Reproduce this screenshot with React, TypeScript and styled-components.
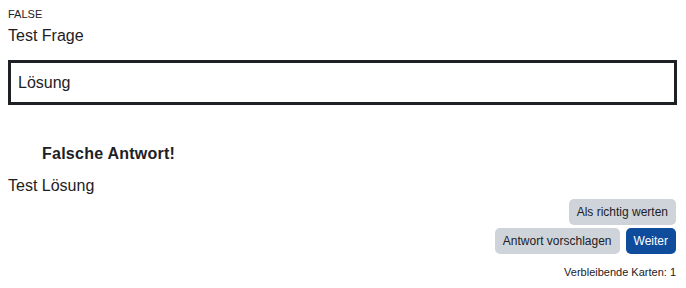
import React from "react";
import styled, { createGlobalStyle } from "styled-components";

const Global = createGlobalStyle`
  body {
    margin: 8px;
    font-family: "Liberation Sans", Arial, sans-serif;
    color: #1d2125;
    background: #fff;
  }
`;

const Page = styled.div`
  display: flex;
  flex-direction: column;
  width: 669px;
`;

const Label = styled.div`
  font-size: 11px;
  line-height: 12px;
`;

const Question = styled.div`
  font-size: 16px;
  line-height: 24px;
  margin-top: 4px;
`;

const AnswerBox = styled.div`
  margin-top: 12px;
  border: 3px solid #1d2125;
  height: 39px;
  box-sizing: content-box;
  display: flex;
  align-items: center;
  padding: 0 7px;
  font-size: 16px;
`;

const Feedback = styled.div`
  margin-top: 37px;
  padding-left: 34px;
  font-size: 16px;
  font-weight: 700;
  line-height: 24px;
  letter-spacing: 0.25px;
`;

const Solution = styled.div`
  margin-top: 8px;
  font-size: 16px;
  line-height: 24px;
`;

const ButtonRow = styled.div<{ $top: number }>`
  display: flex;
  justify-content: flex-end;
  gap: 6px;
  margin-top: ${(p) => p.$top}px;
  padding-right: 1px;
`;

const Button = styled.button<{ $primary?: boolean }>`
  font-family: "Liberation Sans", Arial, sans-serif;
  font-size: 12px;
  height: 26px;
  padding: 0 8px;
  border: none;
  border-radius: 5px;
  background: ${(p) => (p.$primary ? "#0f4c9c" : "#ced4da")};
  color: ${(p) => (p.$primary ? "#fff" : "#1d2125")};
  cursor: pointer;
`;

const Remaining = styled.div`
  margin-top: 11px;
  text-align: right;
  font-size: 11px;
  line-height: 14px;
  padding-right: 1px;
`;

export default function App() {
  return (
    <>
      <Global />
      <Page>
        <Label>FALSE</Label>
        <Question>Test Frage</Question>
        <AnswerBox>Lösung</AnswerBox>
        <Feedback>Falsche Antwort!</Feedback>
        <Solution>Test Lösung</Solution>
        <ButtonRow $top={1}>
          <Button>Als richtig werten</Button>
        </ButtonRow>
        <ButtonRow $top={3}>
          <Button>Antwort vorschlagen</Button>
          <Button $primary>Weiter</Button>
        </ButtonRow>
        <Remaining>Verbleibende Karten: 1</Remaining>
      </Page>
    </>
  );
}
